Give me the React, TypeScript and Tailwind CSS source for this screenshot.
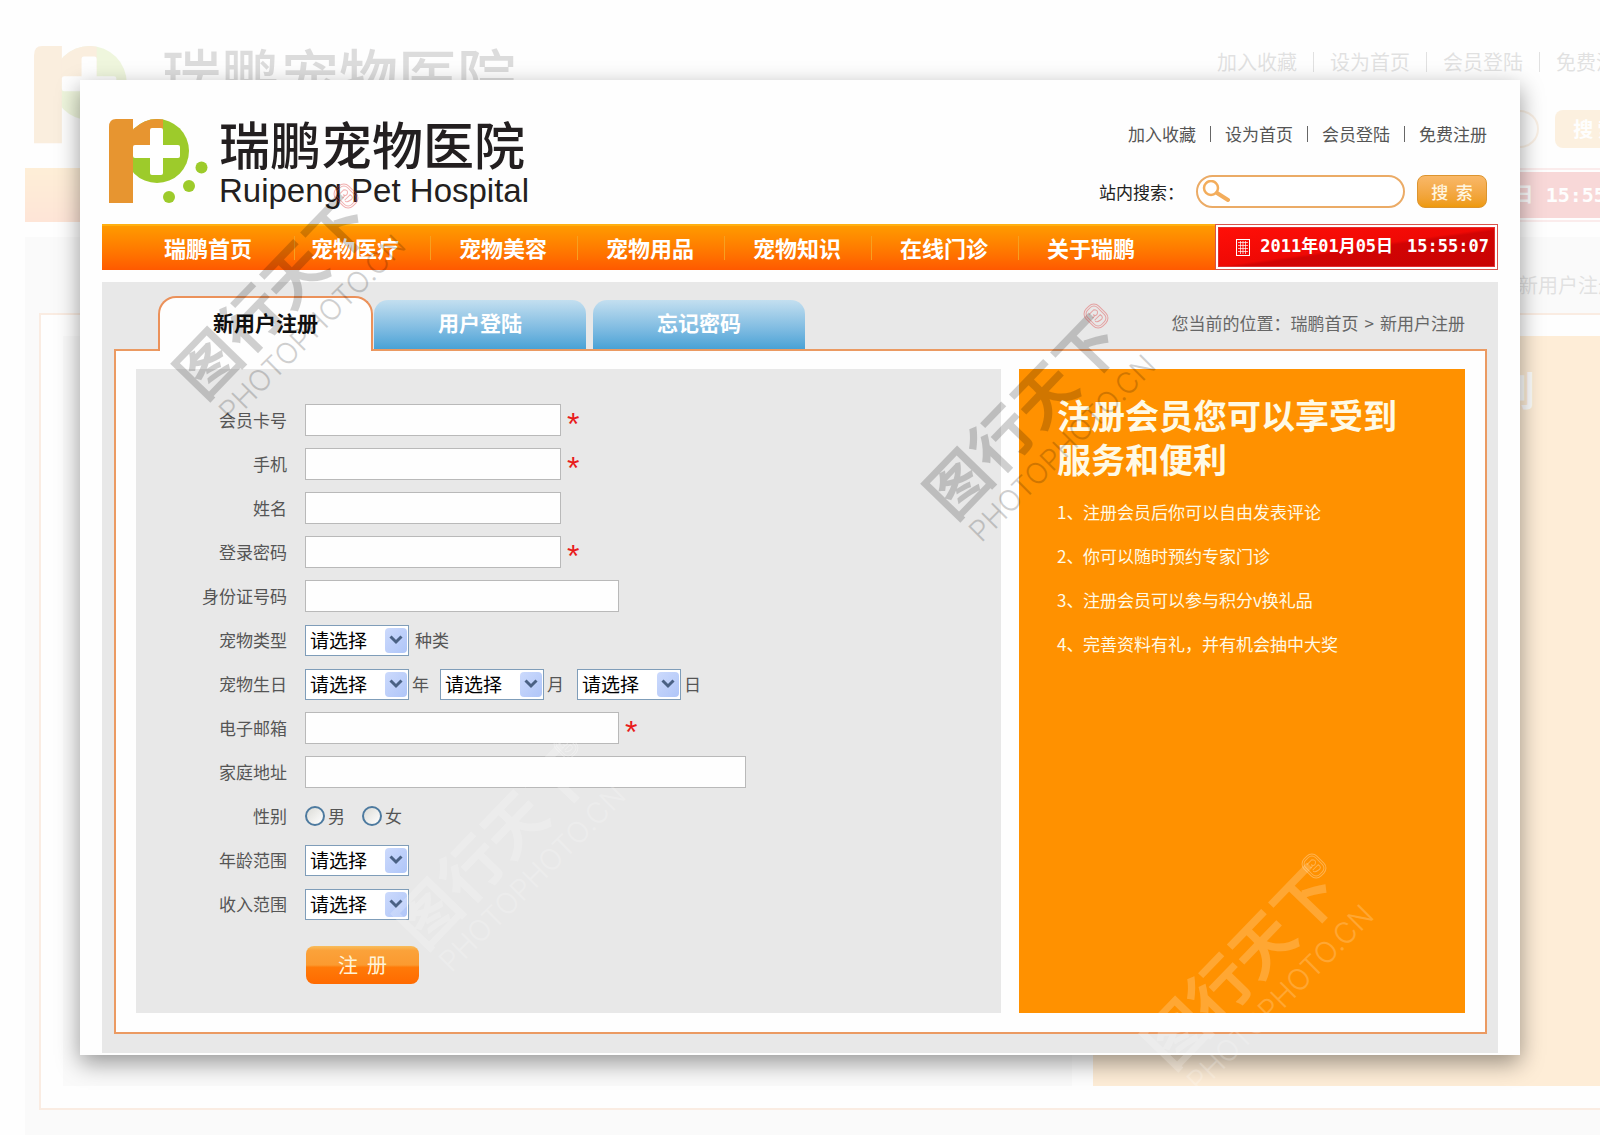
import React from "react";

const links = ["加入收藏", "设为首页", "会员登陆", "免费注册"];

const navItems = [
  { label: "瑞鹏首页", cls: "w-[131px] border-r" },
  { label: "宠物医疗", cls: "w-[136px] border-r pl-4" },
  { label: "宠物美容", cls: "w-[147px] border-r pl-7" },
  { label: "宠物用品", cls: "w-[147px] border-r pl-7" },
  { label: "宠物知识", cls: "w-[147px] border-r pl-7" },
  { label: "在线门诊", cls: "w-[147px] border-r pl-7" },
  { label: "关于瑞鹏", cls: "w-[147px] pl-7" },
];

const benefits = [
  "注册会员后你可以自由发表评论",
  "你可以随时预约专家门诊",
  "注册会员可以参与积分v换礼品",
  "完善资料有礼，并有机会抽中大奖",
];

function LogoMark({ className }: { className: string }) {
  return (
    <svg viewBox="0 0 100 88" className={className} aria-hidden="true">
      <defs>
        <clipPath id="logo-disc">
          <circle cx="48" cy="32" r="32" />
        </clipPath>
      </defs>
      <circle cx="48" cy="32" r="32" fill="#9dcb2b" />
      <rect x="0" y="0" width="54" height="32" fill="#e79530" clipPath="url(#logo-disc)" />
      <path d="M7 0H24V84H0V8Q0 0 7 0Z" fill="#e79530" />
      <rect x="41" y="9" width="13" height="47" rx="2" fill="#fff" />
      <rect x="24" y="26" width="47" height="13" rx="2" fill="#fff" />
      <circle cx="92.500" cy="48.500" r="6" fill="#9dcb2b" />
      <circle cx="80" cy="67" r="6" fill="#9dcb2b" />
      <circle cx="60" cy="78" r="6" fill="#9dcb2b" />
    </svg>
  );
}

function CalendarIcon({ className }: { className: string }) {
  return (
    <svg viewBox="0 0 14 17" className={className} fill="none" stroke="#fff" aria-hidden="true">
      <rect x="0.500" y="0.500" width="13" height="16" />
      <path d="M2 3.500H12M2 6.500H12M2 9.500H12M2 12.500H12M4.500 2V15M7 2V15M9.500 2V15" strokeWidth="0.700" />
    </svg>
  );
}

function Stamp({ tone, className }: { tone: "dark" | "light"; className: string }) {
  const dark = tone === "dark";
  const fill = dark ? "#000" : "#fff";
  return (
    <svg
      viewBox="0 0 280 270"
      className={`pointer-events-none absolute z-20 h-[270px] w-[280px] overflow-visible ${className}`}
      aria-hidden="true"
    >
      <g fill={fill} opacity={dark ? 0.18 : 0.2}>
        <text
          transform="translate(120 124) rotate(-46)"
          textAnchor="middle"
          dominantBaseline="central"
          className="font-['Noto_Sans_CJK_SC',sans-serif] text-[62px] font-bold"
        >
          图行天下
        </text>
        <text
          transform="translate(162 158) rotate(-45)"
          textAnchor="middle"
          dominantBaseline="central"
          className="font-[Inter,sans-serif] text-[29px] font-light"
        >
          PHOTOPHOTO.CN
        </text>
      </g>
      <g
        transform="translate(196 26) rotate(45)"
        fill="none"
        stroke={dark ? "#e03a3a" : "#fff"}
        strokeWidth="1"
        opacity={dark ? 0.4 : 0.3}
      >
        <rect x="-12" y="-9" width="24" height="18" rx="7" />
        <rect x="-10" y="-7" width="20" height="14" rx="5" />
        <path d="M-6 4V-3Q-3 -6 -1 -3T-3 1H-1V4M2 4V-4Q7 -5 6 0T3 4" />
      </g>
    </svg>
  );
}

function Backdrop() {
  return (
    <div aria-hidden="true" className="absolute inset-0 overflow-hidden">
      <div className="absolute top-0 -right-[52px] bottom-0 left-[25px] flex flex-col opacity-15">
        <div className="flex h-[168px] shrink-0 items-start justify-between pr-4 pl-[9px]">
          <div className="flex items-start gap-3 pt-[46px]">
            <LogoMark className="h-[102px] w-[116px]" />
            <span className="text-[59px] leading-[56px] font-medium text-[#231f20]">瑞鹏宠物医院</span>
          </div>
          <div className="flex flex-col items-end pt-[46px]">
            <div className="flex text-[20px] leading-8 text-[#444]">
              {links.map((l, i) => (
                <span key={l} className="flex items-center">
                  {i > 0 && <span className="mx-4 h-5 w-px bg-[#444]" />}
                  {l}
                </span>
              ))}
            </div>
            <div className="mt-8 flex gap-4">
              <span className="h-[38px] w-[242px] rounded-full border-2 border-[#e9a55a]" />
              <span className="flex h-[38px] w-[81px] items-center justify-center rounded-lg bg-[#f5a733] text-[20px] font-bold text-white">
                搜 索
              </span>
            </div>
          </div>
        </div>
        <div className="flex h-[54px] shrink-0 justify-end bg-linear-to-b from-[#ff9c00] to-[#ff5a00]">
          <span className="flex w-[328px] items-center justify-end border-2 border-[#e88] bg-[#d80808] pr-2 font-['DejaVu_Sans_Mono','Noto_Sans_CJK_SC',monospace] text-[20px] font-bold whitespace-pre text-white outline-2 -outline-offset-4 outline-white">
            2011年01月05日 15:55:07
          </span>
        </div>
        <div className="mt-[15px] flex min-h-0 flex-1 flex-col bg-[#e8e8e8] px-[14px]">
          <div className="flex h-[76px] shrink-0 items-center justify-end pt-5 pr-5 text-[20px] text-[#444]">
            您当前的位置：瑞鹏首页 &gt; 新用户注册
          </div>
          <div className="mb-[25px] flex min-h-0 flex-1 gap-[21px] border-2 border-[#e98b4a] bg-white px-[22px] pt-[21px] pb-[22px]">
            <div className="flex-1 bg-[#e8e8e8]" />
            <div className="w-[521px] bg-[#ff9100] pt-7 pl-[42px] text-[40px] leading-[51px] font-bold text-white">
              注册会员您可以享受到
              <br />
              服务和便利
            </div>
          </div>
        </div>
      </div>
    </div>
  );
}

function Header() {
  return (
    <header className="flex h-36 items-start justify-between pr-[11px] pl-[7px]">
      <a href="#" className="flex items-start gap-[10px] pt-[39px]">
        <LogoMark className="h-[88px] w-[100px]" />
        <span className="flex flex-col text-[#231f20]">
          <span className="text-[51px] leading-[48px] font-medium whitespace-nowrap">瑞鹏宠物医院</span>
          <span className="mt-1 font-['Liberation_Sans',sans-serif] text-[33px] leading-10 whitespace-nowrap">
            Ruipeng Pet Hospital
          </span>
        </span>
      </a>
      <div className="flex flex-col items-end pt-10">
        <ul className="flex text-[17px] leading-7 text-[#555]">
          {links.map((l, i) => (
            <li key={l} className="flex items-center">
              {i > 0 && <span className="mx-[14px] h-4 w-px bg-[#666]" />}
              <a href="#">{l}</a>
            </li>
          ))}
        </ul>
        <form className="mt-[27px] flex items-center" onSubmit={(e) => e.preventDefault()}>
          <label htmlFor="site-search" className="text-[17px] text-[#222]">
            站内搜索：
          </label>
          <span className="relative ml-3 block">
            <svg
              viewBox="0 0 28 24"
              className="pointer-events-none absolute top-[5px] left-[6px] h-6 w-7"
              fill="none"
              stroke="#f3ad5c"
              aria-hidden="true"
            >
              <circle cx="9" cy="8" r="7" strokeWidth="2.500" />
              <path d="M15 13L26 20" strokeWidth="4" strokeLinecap="round" />
            </svg>
            <input
              id="site-search"
              type="text"
              className="block h-[33px] w-[209px] rounded-full border-2 border-[#ebab66] bg-white pr-3 pl-9 text-[16px] outline-none"
            />
          </span>
          <button
            type="submit"
            className="ml-3 h-[33px] w-[70px] rounded-lg border border-[#dd952f] bg-linear-to-b from-[#f9b868] to-[#ee9a08] text-[17px] font-medium whitespace-pre text-[#fff6e0]"
          >
            {"搜  索"}
          </button>
        </form>
      </div>
    </header>
  );
}

function NavBar() {
  return (
    <nav className="flex h-[46px] items-stretch justify-between border-t-2 border-[#ffb010] bg-linear-to-b from-[#ff9a00] to-[#ff5900]">
      <ul className="flex items-center pl-[62px] text-[22px] font-bold text-white">
        {navItems.map((n) => (
          <li key={n.label} className={`h-6 border-[#f7a020] leading-[22px] whitespace-nowrap ${n.cls}`}>
            <a href="#">{n.label}</a>
          </li>
        ))}
      </ul>
      <div className="-mt-[2px] w-[283px] border border-[#d9534a] bg-white p-[2px]">
        <div className="flex h-full items-center justify-end border border-[#e03030] bg-[linear-gradient(172deg,#ff0f08_0%,#ef0905_50%,#d20404_54%,#c80303_100%)] pr-[5px] font-['DejaVu_Sans_Mono','Noto_Sans_CJK_SC',monospace] text-[17px] font-bold whitespace-nowrap text-white">
          <CalendarIcon className="mr-[10px] h-[17px] w-[14px]" />
          <span>2011年01月05日</span>
          <span className="ml-[14px]">15:55:07</span>
        </div>
      </div>
    </nav>
  );
}

function Tabs() {
  return (
    <div className="flex h-[53px] items-end pl-[56px]">
      <button
        type="button"
        className="relative z-10 -mb-[2px] h-[55px] w-[215px] rounded-t-[18px] border-2 border-b-0 border-[#eb915a] bg-[#fefefe] pb-1 text-[21px] font-bold text-[#111]"
      >
        新用户注册
      </button>
      <button
        type="button"
        className="ml-px h-[49px] w-[212px] rounded-t-[14px] bg-linear-to-b from-[#c3dff0] to-[#48a2d6] pb-1 text-[21px] font-bold text-white"
      >
        用户登陆
      </button>
      <button
        type="button"
        className="ml-[7px] h-[49px] w-[212px] rounded-t-[14px] bg-linear-to-b from-[#c3dff0] to-[#48a2d6] pb-1 text-[21px] font-bold text-white"
      >
        忘记密码
      </button>
      <p className="ml-auto self-center pr-[33px] text-[17px] leading-6 text-[#666]">
        您当前的位置：<a href="#">瑞鹏首页</a>
        <span className="mx-[6px]">&gt;</span>
        <a href="#">新用户注册</a>
      </p>
    </div>
  );
}

function Row({ label, htmlFor, children }: { label: string; htmlFor?: string; children: React.ReactNode }) {
  return (
    <div className="flex h-11 items-center text-[17px] text-[#555]">
      {htmlFor ? (
        <label htmlFor={htmlFor} className="mr-[18px] w-[151px] text-right">
          {label}
        </label>
      ) : (
        <span className="mr-[18px] w-[151px] text-right">{label}</span>
      )}
      {children}
    </div>
  );
}

function Field({ id, type = "text", size, required }: { id: string; type?: string; size: string; required?: boolean }) {
  return (
    <>
      <input id={id} type={type} className={`h-8 border border-[#b9b9b9] bg-[#fefefe] px-2 outline-none ${size}`} />
      {required && (
        <span className="ml-[6px] h-6 font-['Liberation_Sans',sans-serif] text-[32px] leading-8 text-[#e81c1c]">*</span>
      )}
    </>
  );
}

function Picker({ id, label }: { id: string; label?: string }) {
  return (
    <span className="relative block">
      <select
        id={id}
        aria-label={label}
        className="block h-[31px] w-[104px] appearance-none border border-[#7f9db9] bg-white pl-1 text-[19px] leading-[28px] text-black outline-none"
      >
        <option>请选择</option>
      </select>
      <span className="pointer-events-none absolute top-[3px] right-[2px] flex h-[25px] w-[22px] items-center justify-center rounded-sm bg-linear-to-br from-[#ccdafc] to-[#afc5f8]">
        <svg viewBox="0 0 14 10" className="h-[10px] w-[14px]" fill="none" stroke="#4a6184" strokeWidth="3" aria-hidden="true">
          <path d="M1.500 1.500L7 7L12.500 1.500" />
        </svg>
      </span>
    </span>
  );
}

function Radio({ id, label }: { id: string; label: string }) {
  return (
    <label htmlFor={id} className="mr-[17px] flex items-center gap-[3px]">
      <input
        id={id}
        type="radio"
        name="gender"
        className="h-[20px] w-[20px] appearance-none rounded-full border-2 border-[#4d7a9f] bg-linear-to-br from-[#dcdcd7] to-white checked:bg-[#4d7a9f]"
      />
      {label}
    </label>
  );
}

function RegisterForm() {
  return (
    <form className="min-w-0 flex-1 bg-[#e8e8e8] pt-[29px] pb-[29px]" onSubmit={(e) => e.preventDefault()}>
      <Row label="会员卡号" htmlFor="card">
        <Field id="card" size="w-[256px]" required />
      </Row>
      <Row label="手机" htmlFor="mobile">
        <Field id="mobile" type="tel" size="w-[256px]" required />
      </Row>
      <Row label="姓名" htmlFor="name">
        <Field id="name" size="w-[256px]" />
      </Row>
      <Row label="登录密码" htmlFor="password">
        <Field id="password" type="password" size="w-[256px]" required />
      </Row>
      <Row label="身份证号码" htmlFor="idno">
        <Field id="idno" size="w-[314px]" />
      </Row>
      <Row label="宠物类型" htmlFor="pet-type">
        <Picker id="pet-type" />
        <span className="ml-[6px]">种类</span>
      </Row>
      <Row label="宠物生日">
        <Picker id="birth-year" label="年" />
        <span className="mr-[11px] ml-[3px]">年</span>
        <Picker id="birth-month" label="月" />
        <span className="mr-[13px] ml-[3px]">月</span>
        <Picker id="birth-day" label="日" />
        <span className="ml-[3px]">日</span>
      </Row>
      <Row label="电子邮箱" htmlFor="email">
        <Field id="email" type="email" size="w-[314px]" required />
      </Row>
      <Row label="家庭地址" htmlFor="address">
        <Field id="address" size="w-[441px]" />
      </Row>
      <Row label="性别">
        <Radio id="male" label="男" />
        <Radio id="female" label="女" />
      </Row>
      <Row label="年龄范围" htmlFor="age">
        <Picker id="age" />
      </Row>
      <Row label="收入范围" htmlFor="income">
        <Picker id="income" />
      </Row>
      <button
        type="submit"
        className="mt-5 ml-[170px] block h-[38px] w-[113px] rounded-lg bg-[linear-gradient(180deg,#f8bd5c_0%,#fba23a_12%,#fb9a30_50%,#ff7a08_56%,#ff6a00_100%)] text-[20px] whitespace-pre text-[#fff3d8]"
      >
        {"注  册"}
      </button>
    </form>
  );
}

function Benefits() {
  return (
    <aside className="w-[446px] shrink-0 bg-[#ff9100] px-[38px] pt-6 text-[#fffae6]">
      <h2 className="text-[34px] leading-[44px] font-bold">
        注册会员您可以享受到
        <br />
        服务和便利
      </h2>
      <ol className="mt-[9px] text-[17px] leading-[44px]">
        {benefits.map((b, i) => (
          <li key={b} className="flex">
            <span className="w-[26px] whitespace-nowrap">{i + 1}、</span>
            {b}
          </li>
        ))}
      </ol>
    </aside>
  );
}

export default function App() {
  return (
    <div className="relative min-h-screen overflow-hidden bg-[#fefefe] p-20 font-['Noto_Sans_CJK_SC',sans-serif]">
      <Backdrop />
      <main className="relative z-10 bg-[#fefefe] pr-[22px] pb-[2px] pl-[22px] shadow-[0_8px_22px_rgba(0,0,0,0.4)]">
        <Header />
        <NavBar />
        <section className="mt-3 bg-[#e8e8e8] pt-[14px] pb-[19px]">
          <Tabs />
          <div className="mr-[11px] ml-3 flex gap-[18px] border-2 border-[#eb9a62] bg-[#fefefe] pt-[18px] pr-5 pb-[19px] pl-5">
            <RegisterForm />
            <Benefits />
          </div>
        </section>
      </main>
      <Stamp tone="dark" className="top-[170px] left-[150px]" />
      <Stamp tone="dark" className="top-[290px] left-[900px]" />
      <Stamp tone="light" className="top-[720px] left-[370px]" />
      <Stamp tone="light" className="top-[840px] left-[1118px]" />
    </div>
  );
}
